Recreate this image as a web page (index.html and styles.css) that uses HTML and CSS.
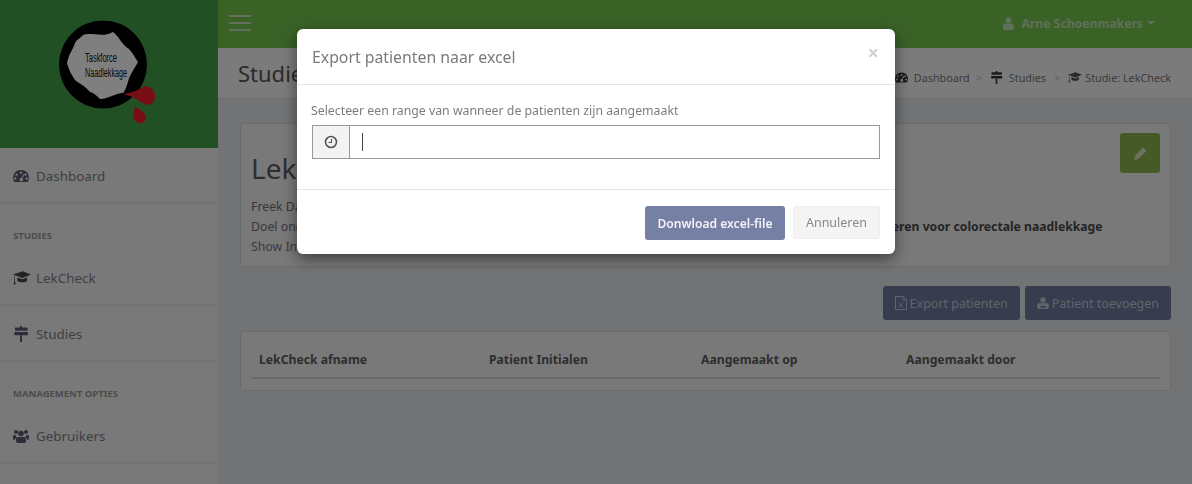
FILE: index.html
```html
<!DOCTYPE html>
<html lang="nl">
<head>
<meta charset="utf-8">
<title>Export patienten</title>
<link rel="stylesheet" href="styles.css">
</head>
<body>
<svg class="defs" width="0" height="0" aria-hidden="true">
  <symbol id="i-dash" viewBox="0 0 16 14"><path fill-rule="evenodd" d="M8 1a7.6 7.6 0 0 0-8 7.6c0 1.7.5 3.2 1.4 4.4h13.2c.9-1.2 1.4-2.7 1.4-4.400A7.6 7.6 0 0 0 8 1zM8 2.600a1.200 1.200 0 1 1 0 2.400 1.200 1.200 0 0 1 0-2.400zM3.600 4.400a1.200 1.200 0 1 1 0 2.400 1.200 1.200 0 0 1 0-2.400zM12.400 4.400a1.200 1.200 0 1 1 0 2.400 1.200 1.200 0 0 1 0-2.400zM2.200 8.200a1.200 1.200 0 1 1 0 2.400 1.200 1.200 0 0 1 0-2.400zM13.800 8.200a1.200 1.200 0 1 1 0 2.400 1.200 1.200 0 0 1 0-2.400zM10.600 4.900l.8.5-2 4a1.700 1.700 0 1 1-1-.4z"/></symbol>
  <symbol id="i-cap" viewBox="0 0 19 14"><path d="M10 0 0 3.400l10 3.600 9-3.600z"/><path d="M4.600 6.400v3.400c1.400 2.400 8.800 2.400 10.200 0V6.400L10 8.200zM1.400 4.600v5.400L.6 13.800h2.200l-.8-3.800V5z"/></symbol>
  <symbol id="i-signs" viewBox="0 0 14 16"><path d="M6 0h2v1.500h5l1 1.600-1 1.600H1V1.500h5zM1 6h13v3.200H1L0 7.600zM6 9.500h2V16H6z"/></symbol>
  <symbol id="i-users" viewBox="0 0 16 14"><circle cx="3" cy="3" r="2"/><circle cx="13" cy="3" r="2"/><circle cx="8" cy="4.500" r="2.800"/><path d="M0 6.200h3.200c-.3.8 0 2 .7 2.800-1 .2-2.200.8-2.400 2H.6C0 11 0 7 0 6.200zM16 6.200h-3.200c.3.8 0 2-.7 2.800 1 .2 2.200.8 2.400 2h.9C16 11 16 7 16 6.200zM5 8h6c1.400 0 2 1.400 2 3.400 0 1.600-.7 2.600-2 2.600H5c-1.300 0-2-1-2-2.600C3 9.400 3.600 8 5 8z"/></symbol>
  <symbol id="i-user" viewBox="0 0 12 14"><circle cx="6" cy="3.400" r="3.200"/><path d="M2.500 6.600C3.500 7.600 8.500 7.600 9.500 6.600 11 7 12 8.500 12 11.500c0 1.500-1 2.500-2.300 2.500H2.300C1 14 0 13 0 11.500 0 8.500 1 7 2.500 6.600z"/></symbol>
  <symbol id="i-doctor" viewBox="0 0 14 14"><circle cx="7" cy="3.400" r="3.200"/><path d="M3 6.800c1 .9 7 .9 8 0 2 .5 3 2.200 3 4.700 0 1.600-1 2.500-2.300 2.500H2.300C1 14 0 13.100 0 11.500 0 9 1 7.300 3 6.800z"/><path d="M4 10.500h6v2H4z" fill="#6f789e"/></symbol>
  <symbol id="i-excel" viewBox="0 0 12 14"><path fill="none" stroke="currentColor" d="M.5.500h7.500l3.500 3.500v9.500H.5zM8 .5V4h3.500"/><path fill="none" stroke="currentColor" d="M3.500 6.500l4.500 5M8 6.500l-4.500 5"/></symbol>
  <symbol id="i-pencil" viewBox="0 0 12 12"><path d="M8.500.5l3 3-7.500 7.500-3.800.800.800-3.800z"/></symbol>
</svg>

<div class="app">
  <aside class="sidebar">
    <div class="logo">
      <svg class="logo-art" viewBox="0 0 100 106" width="100" height="106">
        <circle cx="44" cy="44.500" r="44" fill="#000"/>
        <path d="M8 43C10 33 14 30 16 23C18 19 22 18 24 15C32 12 44 18 54 12C60 16 62 24 70 29C74 33 76 38 79 42C76 48 71 54 69 62C67 68 66 71 64 73C56 73 50 79 41 79C38 76 35 73 31 72C26 66 21 64 16 60C12 54 10 50 8 43z" fill="#fff"/>
        <text class="logo-text" x="26" y="42" textLength="32" lengthAdjust="spacingAndGlyphs">Taskforce</text>
        <text class="logo-text" x="26" y="57" textLength="42" lengthAdjust="spacingAndGlyphs">Naadlekkage</text>
        <path d="M64 74C72 73 80 70 86 66C92 67 97 71 96 78C95 84 90 86 85 84C80 81 74 76 64 74z" fill="#f01c28"/>
        <path d="M76 86C79 89 87 92 87 98C86 102 83 104 80 103C76 102 74 98 74 95C74 92 76 90 76 86z" fill="#f01c28"/>
      </svg>
    </div>
    <nav class="nav">
      <a class="nav-item"><svg class="nav-icon"><use href="#i-dash"/></svg>Dashboard</a>
      <div class="nav-title">STUDIES</div>
      <a class="nav-item"><svg class="nav-icon nav-icon-wide"><use href="#i-cap"/></svg>LekCheck</a>
      <a class="nav-item"><svg class="nav-icon"><use href="#i-signs"/></svg>Studies</a>
      <div class="nav-title nav-title-last">MANAGEMENT OPTIES</div>
      <a class="nav-item"><svg class="nav-icon"><use href="#i-users"/></svg>Gebruikers</a>
    </nav>
  </aside>

  <div class="main">
    <header class="topbar">
      <div class="burger"><span></span><span></span><span></span></div>
      <div class="user"><svg class="user-icon"><use href="#i-user"/></svg>Arne Schoenmakers<span class="caret"></span></div>
    </header>
    <div class="page-head">
      <h1 class="page-title">Studies</h1>
      <ol class="crumbs">
        <li><svg class="crumb-icon"><use href="#i-dash"/></svg>Dashboard</li>
        <li class="sep sep-first">&gt;</li>
        <li><svg class="crumb-icon"><use href="#i-signs"/></svg>Studies</li>
        <li class="sep">&gt;</li>
        <li><svg class="crumb-icon crumb-icon-cap"><use href="#i-cap"/></svg>Studie: LekCheck</li>
      </ol>
    </div>
    <div class="content">
      <section class="card study">
        <div class="study-text">
          <h2 class="study-title">LekCheck</h2>
          <p>Freek Daams</p>
          <p>Doel onderzoek: <b class="goal">het valideren van een nieuwe vragenlijst voor het vroegtijdig en zeer betrouwbaar detecteren voor colorectale naadlekkage</b></p>
          <p class="link">Show Info</p>
        </div>
        <button class="btn-edit"><svg class="edit-icon"><use href="#i-pencil"/></svg></button>
      </section>
      <div class="actions">
        <button class="btn-dark"><svg class="btn-icon"><use href="#i-excel"/></svg>Export patienten</button>
        <button class="btn-dark"><svg class="btn-icon"><use href="#i-doctor"/></svg>Patient toevoegen</button>
      </div>
      <section class="card table-card">
        <div class="thead">
          <div>LekCheck afname</div>
          <div>Patient Initialen</div>
          <div>Aangemaakt op</div>
          <div>Aangemaakt door</div>
        </div>
      </section>
    </div>
  </div>
</div>

<div class="backdrop"></div>

<div class="modal">
  <div class="modal-head">
    <h3 class="modal-title">Export patienten naar excel</h3>
    <span class="close">×</span>
  </div>
  <div class="modal-body">
    <label class="field-label">Selecteer een range van wanneer de patienten zijn aangemaakt</label>
    <div class="input-group">
      <span class="addon">
        <svg class="clock" viewBox="0 0 14 14" width="14" height="14"><circle cx="7" cy="7" r="5.500" fill="none" stroke="currentColor" stroke-width="1.600"/><path d="M7.500 4v3.500H4.500" fill="none" stroke="currentColor" stroke-width="1.200"/></svg>
      </span>
      <div class="input"><span class="cursor"></span></div>
    </div>
  </div>
  <div class="modal-foot">
    <button class="btn-primary">Donwload excel-file</button>
    <button class="btn-default">Annuleren</button>
  </div>
</div>
</body>
</html>
```
FILE: styles.css
```css
* { box-sizing: border-box; }
html, body { margin: 0; height: 100%; overflow: hidden; }
body { font-family: "Noto Sans", "Open Sans", sans-serif; font-size: 12.5px; color: #676a6c; background: #e4e7ea; }
.defs { position: absolute; }
svg { fill: currentColor; }
button { font-family: inherit; cursor: pointer; }

.app { display: flex; height: 484px; }

.sidebar { width: 218px; flex: none; background: #f3f3f3; }
.logo { height: 148px; background: #45a04a; display: flex; justify-content: center; padding: 20px 0 0 0; }
.logo-text { font-family: "Liberation Sans", sans-serif; font-size: 12px; fill: #111; }
.nav-item { display: flex; align-items: center; height: 56px; padding: 2px 0 0 13px; font-size: 13.400px; color: #7e7e86; border-bottom: 2px solid #e6e6e6; }
.nav-icon { width: 16px; height: 16px; margin-right: 7px; color: #5a5a72; }
.nav-icon-wide { width: 18px; margin-right: 5px; color: #444; }
.nav-title { height: 46px; padding: 26px 0 0 13px; font-size: 9.500px; line-height: 12px; font-weight: 700; color: #999; }
.nav-title-last { padding-top: 26px; }

.main { flex: 1; min-width: 0; display: flex; flex-direction: column; }
.topbar { height: 48px; flex: none; background: #74c54f; display: flex; align-items: center; justify-content: space-between; padding: 0 37px 2px 11px; }
.burger { width: 22px; display: flex; flex-direction: column; gap: 5px; }
.burger span { height: 2px; background: #c6e0bd; }
.user { display: flex; align-items: center; font-size: 12.200px; font-weight: 700; color: #c0dfb3; }
.user-icon { width: 11px; height: 13px; margin-right: 7px; }
.caret { margin-left: 4px; border: 4px solid transparent; border-top-color: #c0dfb3; border-bottom: 0; }

.page-head { height: 51px; flex: none; background: #f6f6f6; border-bottom: 1px solid #dcdcdc; display: flex; align-items: center; justify-content: space-between; padding: 0 21px 0 20px; }
.page-title { margin: 0; font-size: 22px; font-weight: 400; color: #555; }
.crumbs { list-style: none; margin: 0; padding: 9px 0 0; display: flex; align-items: center; gap: 8px; font-size: 10.800px; color: #777; }
.crumbs li { display: flex; align-items: center; }
.sep { color: #c4c4c4; }
.crumbs .sep-first { margin-left: -2px; }
.crumb-icon { width: 13px; height: 13px; margin-right: 6px; color: #333; }
.crumb-icon-cap { width: 14px; margin-right: 3px; color: #555; }

.content { padding: 24px 21px 0 22px; }
.card { background: #f3f3f3; border: 1px solid #d8dbde; border-radius: 3px; }
.study { height: 144px; padding: 0 10px; display: flex; justify-content: space-between; }
.study-title { margin: 26px 0 11px; font-size: 28px; line-height: 36px; font-weight: 400; color: #5c5c5c; }
.study-text p { margin: 0; font-size: 12.300px; line-height: 20px; color: #707070; white-space: nowrap; }
.study-text .goal { font-size: 12.200px; color: #4a4a4a; }
.study-text .link { color: #70738c; }
.btn-edit { width: 40px; height: 40px; margin: 9px 0 0; background: #8cb54e; border: 0; border-radius: 3px; color: #d6e6bd; display: flex; align-items: center; justify-content: center; }
.edit-icon { width: 13px; height: 13px; }

.actions { display: flex; justify-content: flex-end; gap: 5px; margin: 19px 0 0; }
.btn-dark { height: 34px; padding: 0 12px; display: flex; align-items: center; background: #6f789e; border: 0; border-radius: 3px; font-size: 12.500px; color: #c4c8d6; }
.btn-icon { width: 12px; height: 14px; margin-right: 3px; }

.table-card { margin-top: 11px; height: 60px; padding: 0 10px; }
.thead { height: 47px; display: grid; grid-template-columns: 230px 212px 205px 1fr; align-items: center; padding: 10px 8px 0; border-bottom: 2px solid #d4d4d4; font-size: 12.200px; font-weight: 700; color: #5c5c5c; }

.backdrop { position: fixed; inset: 0; background: rgba(0, 0, 0, .5); }

.modal { position: fixed; left: 297px; top: 29px; width: 598px; height: 225px; background: #fff; border-radius: 6px; box-shadow: 0 5px 15px rgba(0, 0, 0, .5); display: flex; flex-direction: column; }
.modal-head { height: 56px; flex: none; display: flex; align-items: center; justify-content: space-between; padding: 0 15px; border-bottom: 1px solid #e5e5e5; }
.modal-title { margin: 0; font-size: 15.800px; font-weight: 400; color: #777b7d; }
.close { font-size: 20px; font-weight: 700; color: #d0d0d0; margin: -8px 1px 0 0; }
.modal-body { height: 105px; flex: none; padding: 17px 15px 0 14px; border-bottom: 1px solid #e5e5e5; }
.field-label { display: block; font-size: 12.300px; line-height: 17px; color: #7a7d7f; margin-bottom: 6px; }
.input-group { display: flex; height: 34px; margin-left: 1px; border: 1px solid #999; }
.addon { width: 37px; flex: none; background: #f3f3f3; border-right: 1px solid #999; color: #555; display: flex; align-items: center; justify-content: center; }
.input { flex: 1; padding: 7px 12px; }
.cursor { display: block; width: 1px; height: 18px; background: #444; }
.modal-foot { flex: 1; display: flex; justify-content: flex-end; align-items: flex-start; gap: 8px; padding: 16px 15px 0; }
.btn-primary { width: 140px; height: 34px; background: #767fa4; border: 0; border-radius: 3px; font-size: 12.100px; font-weight: 600; color: #f2f3f8; }
.btn-default { width: 87px; height: 33px; background: #f4f4f4; border: 1px solid #eee; border-radius: 3px; font-size: 12.500px; color: #85888a; }
```
